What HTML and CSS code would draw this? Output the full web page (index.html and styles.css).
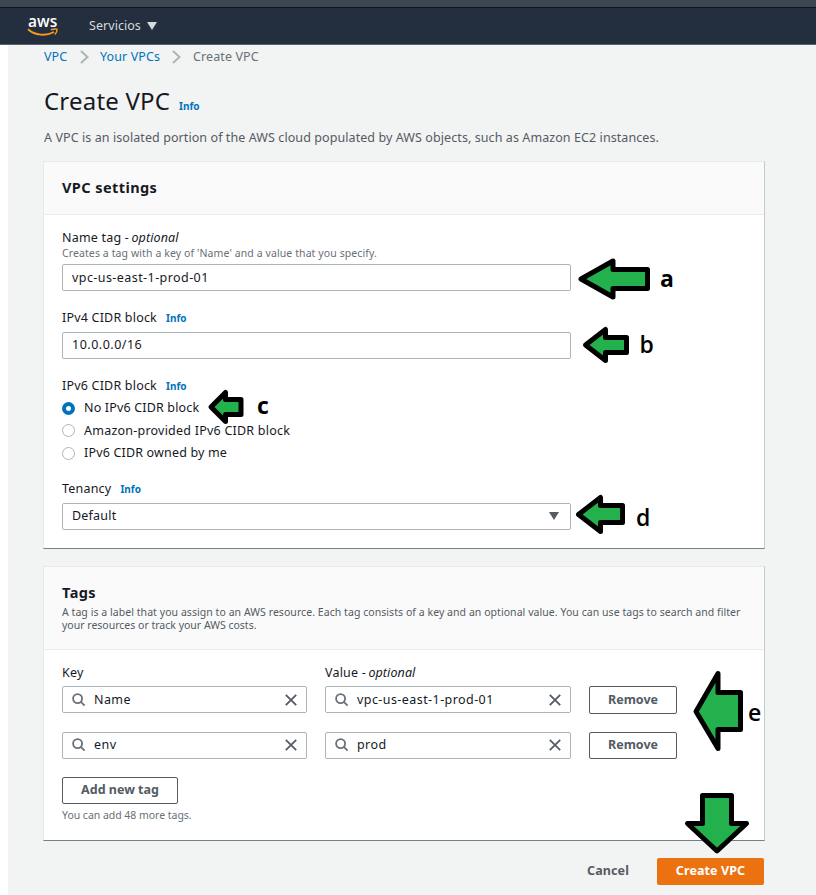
FILE: index.html
```html
<!DOCTYPE html>
<html lang="en">
<head>
<meta charset="utf-8">
<title>Create VPC</title>
<link rel="stylesheet" href="styles.css">
</head>
<body>
<svg class="defs" width="0" height="0" aria-hidden="true">
  <symbol id="search" viewBox="0 0 14 14"><circle cx="5.6" cy="5.6" r="4.5"/><path d="M8.9 8.9L12.600 12.600"/></symbol>
  <symbol id="close" viewBox="0 0 12 12"><path d="M.8.8L11.2 11.2M11.2.8L.8 11.2"/></symbol>
</svg>
<header class="nav">
  <div class="logo">
    <span class="logo-text">aws</span>
    <svg class="smile" width="32" height="9" viewBox="0 0 32 9"><path d="M1 1.200C8 7.600 19 8.400 27 4" /><path class="tip" d="M24 1.700C27 .7 29.900.8 30 1.400C30.200 2.600 29.200 5 27.800 6.500"/></svg>
  </div>
  <span class="services">Servicios</span>
  <svg class="caret" width="10" height="8" viewBox="0 0 10 8"><path d="M0 0H10L5 8Z"/></svg>
</header>
<main class="page">
  <nav class="crumbs">
    <a class="crumb-vpc">VPC</a>
    <svg class="chev" width="9" height="14" viewBox="0 0 9 14"><path d="M1 1L7.5 7L1 13"/></svg>
    <a class="crumb-list">Your VPCs</a>
    <svg class="chev" width="9" height="14" viewBox="0 0 9 14"><path d="M1 1L7.5 7L1 13"/></svg>
    <span class="crumb-here">Create VPC</span>
  </nav>
  <div class="title"><h1>Create VPC</h1><a class="info">Info</a></div>
  <p class="lead">A VPC is an isolated portion of the AWS cloud populated by AWS objects, such as Amazon EC2 instances.</p>

  <section class="card settings">
    <div class="card-head"><h2>VPC settings</h2></div>
    <div class="card-body">
      <div class="label"><span>Name tag - </span><i>optional</i></div>
      <div class="hint name-hint">Creates a tag with a key of 'Name' and a value that you specify.</div>
      <div class="input"><span class="val">vpc-us-east-1-prod-01</span></div>
      <div class="label gap"><span>IPv4 CIDR block</span><a class="info">Info</a></div>
      <div class="input raised"><span class="val ip">10.0.0.0/16</span></div>
      <div class="label gap radio-label"><span>IPv6 CIDR block</span><a class="info">Info</a></div>
      <div class="radio"><span class="dot on"></span><span class="r1">No IPv6 CIDR block</span></div>
      <div class="radio"><span class="dot"></span><span class="r2">Amazon-provided IPv6 CIDR block</span></div>
      <div class="radio"><span class="dot"></span><span class="r1">IPv6 CIDR owned by me</span></div>
      <div class="label gap tenancy"><span>Tenancy</span><a class="info">Info</a></div>
      <div class="input select"><span>Default</span><svg width="10" height="8" viewBox="0 0 10 8"><path d="M0 0H10L5 8Z"/></svg></div>
    </div>
  </section>

  <section class="card tags">
    <div class="card-head">
      <h2>Tags</h2>
      <p>A tag is a label that you assign to an AWS resource. Each tag consists of a key and an optional value. You can use tags to search and filter<br><span class="second">your resources or track your AWS costs.</span></p>
    </div>
    <div class="card-body">
      <div class="tag-grid">
        <div class="label"><span>Key</span></div>
        <div class="label"><span>Value - </span><i>optional</i></div>
        <div></div>
        <div class="input search"><svg class="ic"><use href="#search"/></svg><span class="val">Name</span><svg class="x"><use href="#close"/></svg></div>
        <div class="input search"><svg class="ic"><use href="#search"/></svg><span class="val">vpc-us-east-1-prod-01</span><svg class="x"><use href="#close"/></svg></div>
        <div class="btn tall">Remove</div>
        <div class="input search raised"><svg class="ic"><use href="#search"/></svg><span class="val">env</span><svg class="x"><use href="#close"/></svg></div>
        <div class="input search raised"><svg class="ic"><use href="#search"/></svg><span class="val">prod</span><svg class="x"><use href="#close"/></svg></div>
        <div class="btn raised">Remove</div>
      </div>
      <div class="btn add raised">Add new tag</div>
      <div class="hint more">You can add 48 more tags.</div>
    </div>
  </section>

  <footer class="actions"><span class="cancel">Cancel</span><div class="primary">Create VPC</div></footer>
</main>
<svg class="marks" width="816" height="895" viewBox="0 0 816 895">
  <g class="arrows">
    <path d="M581 279L613 261V269.5H647.500V288.500H613V297Z"/>
    <path d="M585.500 345L605.500 329.500V337.500H626.500V352.500H605.500V360.500Z"/>
    <path d="M211 407L225.500 392.500V399.500H241V414.500H225.500V421.500Z"/>
    <path d="M578.500 514.500L600.500 497.500V505.500H622.500V522.500H600.500V531.500Z"/>
    <path d="M696 711.500L718 673.500V692.500H740.500V729.500H718V748.500Z"/>
    <path d="M702.500 795.500H731.500V823.500H746.500L717 851L687.500 823.500H702.500Z"/>
  </g>
  <g class="letters">
    <text class="heavy" x="660" y="287">a</text>
    <text x="639.500" y="353">b</text>
    <text class="heavy" x="257" y="414">c</text>
    <text x="636" y="525.500">d</text>
    <text x="748" y="721">e</text>
  </g>
</svg>
</body>
</html>
```
FILE: styles.css
```css
* { box-sizing: border-box; }
body { margin: 0; width: 816px; height: 895px; overflow: hidden; position: relative; background: #fff; font: 12.5px/16px "Noto Sans", "Open Sans", sans-serif; color: #16191f; }
h1, h2, p { margin: 0; font-weight: 400; }
span, a, i, h1, h2, p { white-space: nowrap; }
.defs { position: absolute; }

.nav { height: 45px; background: #232f3e; border-top: 7px solid #3b4751; border-bottom: 1px solid #596169; box-shadow: inset 0 1px #11161c; display: flex; padding-left: 27px; color: #d5dbdb; }
.logo { width: 62px; height: 30px; padding-top: 7px; }
.logo-text { display: block; font: 600 15.5px/14px "Open Sans", sans-serif; color: #fff; padding-left: 1px; }
.smile { display: block; fill: none; stroke: #f79a1f; stroke-width: 1.9; }
.tip { stroke-width: 1.5; }
.services { width: 58px; padding-top: 11px; letter-spacing: .05px; }
.caret { margin-top: 15px; fill: #d5dbdb; }

.page { margin-left: 8px; height: 850px; padding: 4px 52px 0 36px; background: #f2f3f3; }
.crumbs { display: flex; height: 16px; align-items: center; color: #687078; letter-spacing: .1px; }
.crumbs a, .info { color: #0073bb; }
.crumb-vpc { width: 36px; }
.crumb-list { width: 72px; margin-left: 11px; }
.crumb-here { margin-left: 12px; }
.chev { fill: none; stroke: #aab7b8; stroke-width: 2; }
.title { display: flex; align-items: baseline; height: 32px; margin-top: 20px; }
.title h1 { font-size: 24px; line-height: 32px; width: 135px; letter-spacing: .2px; }
.info { font-size: 10px; font-weight: 700; letter-spacing: 0; }
.lead { margin-top: 13px; color: #545b64; letter-spacing: .083px; }

.card { width: 722px; margin-left: -1px; background: #fff; border: 1px solid #e6eaea; border-right-color: #c3cbcb; border-bottom-color: #738086; }
.settings { height: 388px; margin-top: 15px; }
.tags { height: 275px; margin-top: 17px; }
.card-head { background: #fafafa; border-bottom: 1px solid #eaeded; padding: 15px 18px 0; }
.settings .card-head { height: 53px; }
.tags .card-head { height: 83px; }
h2 { font-size: 14.5px; font-weight: 700; line-height: 20px; letter-spacing: .42px; }
.card-head p { font-size: 10.5px; line-height: 13px; color: #545b64; margin-top: 4px; letter-spacing: .056px; }
.second { letter-spacing: 0; }
.card-body { padding: 15px 18px 0; }
.label { display: flex; height: 16px; letter-spacing: .2px; }
.label span { white-space: pre; }
.label i { letter-spacing: .1px; margin-left: -1px; }
.label .info { margin-left: 9px; }
.gap { margin-top: 19px; margin-bottom: 6px; }
.hint { font-size: 10.5px; line-height: 14px; color: #687078; letter-spacing: .1px; }
.name-hint { margin-bottom: 4px; }
.input { width: 509px; height: 27px; border: 1px solid #aab7b8; border-radius: 2px; background: #fff; display: flex; align-items: center; padding: 0 9px; }
.raised { padding-bottom: 2px; }
.val { letter-spacing: .43px; }
.ip { letter-spacing: .5px; }
.radio-label { margin-bottom: 3px; }
.radio { display: flex; align-items: center; height: 22.500px; gap: 9px; }
.r1 { letter-spacing: .17px; }
.r2 { letter-spacing: .23px; }
.dot { width: 13px; height: 13px; border: 1px solid #aab7b8; border-radius: 50%; background: #fff; }
.dot.on { border: 4px solid #0073bb; }
.tenancy { margin-top: 16px; }
.select span { letter-spacing: .2px; }
.select svg { margin-left: auto; margin-right: 2px; fill: #545b64; }

.tag-grid { display: grid; grid-template-columns: 245px 246px 88px; column-gap: 18px; grid-template-rows: 21px 46px 27px; align-items: start; }
.tag-grid .input { width: auto; }
.search .ic { width: 14px; height: 14px; margin-right: 8px; fill: none; stroke: #687078; stroke-width: 1.8; }
.search .x { width: 12px; height: 12px; margin-left: auto; fill: none; stroke: #545b64; stroke-width: 1.8; }
.btn { height: 27px; border: 1px solid #545b64; border-radius: 2px; display: flex; align-items: center; justify-content: center; font-weight: 700; color: #545b64; white-space: nowrap; background: #fff; }
.tall { height: 28px; padding-bottom: 1px; }
.add { width: 116px; margin-top: 18px; }
.more { margin-top: 4px; letter-spacing: -.03px; }
.actions { display: flex; justify-content: flex-end; align-items: center; margin-top: 17px; font-weight: 700; height: 27px; }
.cancel { color: #545b64; margin-right: 28px; letter-spacing: .1px; padding-bottom: 2px; }
.primary { width: 107px; height: 27px; background: #ec7211; border-radius: 2px; color: #fff; display: flex; align-items: center; justify-content: center; white-space: nowrap; letter-spacing: .1px; padding-bottom: 2px; }

.marks { position: absolute; left: 0; top: 0; }
.arrows path { fill: #22b14c; stroke: #000; stroke-width: 5; stroke-linejoin: round; }
.letters { font: 600 23px "Open Sans", sans-serif; fill: #000; }
.heavy { font-weight: 700; }
```
